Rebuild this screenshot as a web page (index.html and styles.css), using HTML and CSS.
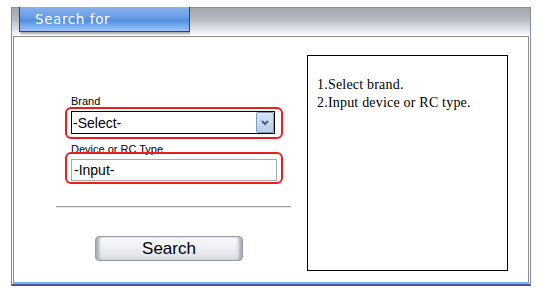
FILE: index.html
```html
<!DOCTYPE html>
<html lang="en">
<head>
<meta charset="UTF-8">
<title>Search for</title>
<link rel="stylesheet" href="styles.css">
</head>
<body>
<div class="frame">
    <div class="head">
        <div class="head-edge"></div>
        <div class="tab">Search for</div>
        <div class="head-rest"></div>
    </div>
    <div class="panel">
        <div class="left">
            <div class="label">Brand</div>
            <div class="hilite">
                <div class="select">
                    <span>-Select-</span>
                    <span class="drop">
                        <svg width="10" height="8" viewBox="0 0 10 8"><path d="M2 2 L5 5 L8 2" fill="none" stroke="#4a5f8a" stroke-width="2"/></svg>
                    </span>
                </div>
            </div>
            <div class="label second">Device or RC Type</div>
            <div class="hilite boxed">
                <div class="input">-Input-</div>
            </div>
            <div class="rule"></div>
            <button class="search">Search</button>
        </div>
        <div class="help">
            <p>1.Select brand.</p>
            <p>2.Input device or RC type.</p>
        </div>
    </div>
</div>
</body>
</html>
```

FILE: styles.css
```css
body {
    margin: 0;
    background-color: #fff;
    font-family: "Liberation Sans", Arial, sans-serif;
}

.frame {
    width: 518px;
    margin: 7px 0 0 11px;
    border-left: 1px solid #8a8d96;
    border-right: 1px solid #8a8d96;
    border-bottom: 2px solid #55509a;
}

.head {
    display: flex;
    height: 29px;
}

.head-edge,
.head-rest {
    border-top: 1px solid #8a8d96;
    background: linear-gradient(#a4a7ae, #b6b9c0 40%, #e4e6ec 80%, #fff);
}

.head-edge {
    width: 7px;
}

.head-rest {
    flex: 1;
}

.tab {
    width: 171px;
    height: 25px;
    box-sizing: border-box;
    border: 1px solid #3c3a8e;
    border-top: none;
    background: linear-gradient(#88b2ec, #6c9ee6 40%, #4f8fe0 55%, #78acf0 80%, #9cc4f6);
    box-shadow: 1px 2px 2px rgba(0, 0, 0, 0.35);
    color: #fff;
    font-family: "DejaVu Sans", sans-serif;
    font-size: 13.5px;
    letter-spacing: 0.6px;
    line-height: 24px;
    padding-left: 15px;
}

.panel {
    display: flex;
    margin: 0 1px;
    height: 245px;
    border: 1px solid #8a8d96;
    border-bottom: 2px solid #74b6f4;
    padding-left: 42px;
}

.left {
    width: 235px;
    display: flex;
    flex-direction: column;
    padding-top: 58px;
}

.label {
    font-size: 11px;
    line-height: 12px;
    height: 12px;
    margin-left: 15px;
    color: #000;
}

.label.second {
    margin-top: 4px;
}

.hilite {
    width: 218px;
    height: 32px;
    box-sizing: border-box;
    margin-left: 9px;
    border: 2px solid #ee1c1c;
    border-radius: 6px;
    padding: 2px 6px 2px 4px;
}

.hilite.boxed {
    margin-top: -3px;
    padding: 5px 4px 1px 4px;
}

.select {
    display: flex;
    justify-content: space-between;
    align-items: center;
    height: 23px;
    box-sizing: border-box;
    border: 1px solid #000;
    font-size: 14px;
    padding-left: 1px;
}

.drop {
    display: flex;
    align-items: center;
    justify-content: center;
    width: 16px;
    height: 19px;
    border: 1px solid #7f9db9;
    border-radius: 2px;
    background: linear-gradient(#d8e4f6, #b8ccec);
}

.input {
    height: 22px;
    box-sizing: border-box;
    border: 1px solid #a8a8a8;
    font-size: 14px;
    line-height: 20px;
    padding-left: 2px;
}

.rule {
    height: 1px;
    background-color: #a4a4a4;
    border-bottom: 1px solid #e4e4ec;
    margin-top: 22px;
}

.search {
    width: 148px;
    height: 25px;
    margin: 28px 0 0 39px;
    padding: 0;
    border: 1px solid #9a9ca4;
    border-radius: 4px;
    background: linear-gradient(#fbfbfc, #eceef2 50%, #dcdfe6);
    box-shadow: inset 4px 0 3px -1px #a8acb4, inset -4px 0 3px -1px #a8acb4;
    font-family: "Liberation Sans", Arial, sans-serif;
    font-size: 17px;
    color: #000;
}

.help {
    width: 201px;
    height: 216px;
    box-sizing: border-box;
    margin: 18px 0 0 16px;
    border: 1px solid #000;
    padding: 20px 0 0 9px;
    font-family: "Liberation Serif", "Times New Roman", serif;
    font-size: 14px;
    letter-spacing: 0.2px;
}

.help p {
    margin: 0;
    line-height: 18px;
}
```
